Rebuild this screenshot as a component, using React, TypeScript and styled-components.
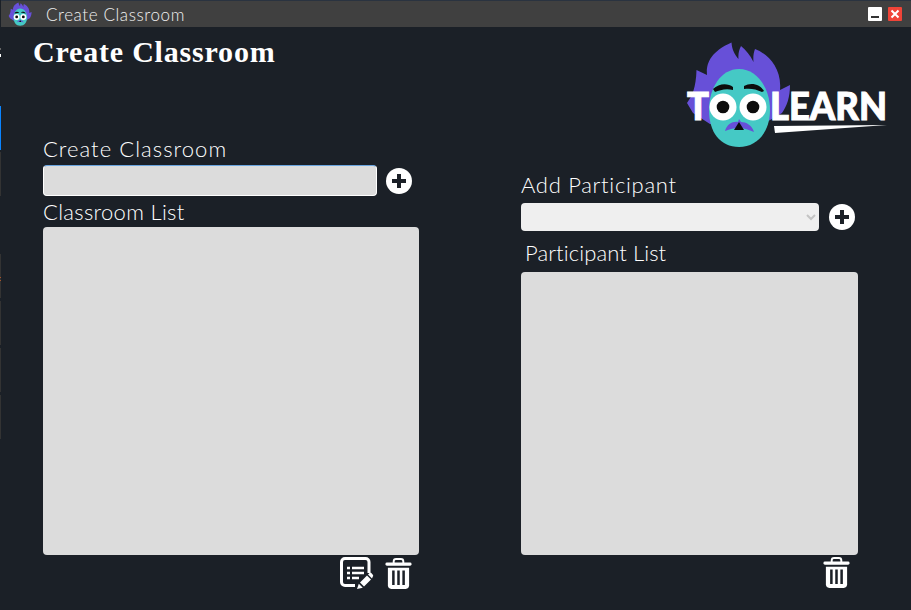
import React from "react";
import styled, { createGlobalStyle } from "styled-components";

const Global = createGlobalStyle`
  html, body { margin: 0; padding: 0; background: #1b2027; overflow: hidden; }
  * { box-sizing: border-box; }
`;

const Window = styled.div`
  width: 911px;
  height: 610px;
  display: flex;
  flex-direction: column;
  background: #1b2027;
  font-family: "Lato", "Open Sans", sans-serif;
  color: #fff;
`;

const TitleBar = styled.header`
  height: 27px;
  margin-left: 1px;
  padding: 0 9px 0 7px;
  display: flex;
  align-items: center;
  background: #404040;
  border-top: 1px solid #2a3340;
`;

const TitleText = styled.span`
  margin-left: 14px;
  flex: 1;
  font-size: 17px;
  font-weight: 300;
  letter-spacing: 0.6px;
  color: #f0f0f0;
`;

const WinButton = styled.button<{ $close?: boolean }>`
  width: 14px;
  height: 14px;
  margin-left: 6px;
  padding: 0;
  border: 0;
  border-radius: 1px;
  display: flex;
  align-items: center;
  justify-content: center;
  background: ${(p) => (p.$close ? "#f04438" : "#ffffff")};
`;

const Body = styled.div`
  flex: 1;
  display: flex;
`;

const Sliver = styled.div`
  width: 1px;
  padding-top: 21px;
  display: flex;
  flex-direction: column;
`;

const SliverMark = styled.i<{ $color: string; $h: number; $gap: number }>`
  display: block;
  width: 1px;
  height: ${(p) => p.$h}px;
  margin-bottom: ${(p) => p.$gap}px;
  background: ${(p) => p.$color};
`;

const Columns = styled.main`
  flex: 1;
  display: grid;
  grid-template-columns: 488px 1fr;
  padding-left: 32px;
`;

const LeftColumn = styled.section`
  display: flex;
  flex-direction: column;
`;

const RightColumn = styled.section`
  display: flex;
  flex-direction: column;
`;

const Heading = styled.h1`
  margin: 7px 0 0 0;
  height: 36px;
  font-family: "Liberation Serif", serif;
  font-size: 30px;
  line-height: 36px;
  font-weight: 700;
  letter-spacing: 0.8px;
`;

const FieldLabel = styled.label<{ $indent?: number; $mt: number; $mb: number; $track: number }>`
  display: block;
  height: 20px;
  margin: ${(p) => p.$mt}px 0 ${(p) => p.$mb}px ${(p) => p.$indent ?? 0}px;
  font-size: 22px;
  line-height: 20px;
  font-weight: 300;
  letter-spacing: ${(p) => p.$track}px;
  color: #ffffff;
`;

const LeftForm = styled.div`
  margin-top: 69px;
  padding-left: 10px;
  display: flex;
  flex-direction: column;
`;

const FieldRow = styled.div<{ $gap: number }>`
  display: flex;
  align-items: center;
  gap: ${(p) => p.$gap}px;
`;

const TextField = styled.input`
  width: 334px;
  height: 31px;
  padding: 0;
  border: 1px solid #fff;
  border-top-color: #6aa5e0;
  border-radius: 4px;
  background: #dcdcdc;
  outline: none;
`;

const Select = styled.select`
  width: 298px;
  height: 28px;
  border: 0;
  border-radius: 4px;
  background-color: #efefef;
  color: #c4c4c4;
  opacity: 1;
`;

const ListBox = styled.div<{ $w: number; $h: number }>`
  width: ${(p) => p.$w}px;
  height: ${(p) => p.$h}px;
  border-radius: 4px;
  background: #dcdcdc;
`;

const IconRow = styled.div<{ $w: number; $pr: number }>`
  width: ${(p) => p.$w}px;
  margin-top: 2px;
  padding-right: ${(p) => p.$pr}px;
  display: flex;
  justify-content: flex-end;
  gap: 11px;
`;

const IconButton = styled.button`
  padding: 0;
  border: 0;
  background: transparent;
  display: block;
  line-height: 0;
`;

const LogoBox = styled.div`
  height: 123px;
  margin-left: 159px;
  margin-top: 13px;
`;

const RightForm = styled.div`
  margin-top: 12px;
  display: flex;
  flex-direction: column;
`;

const Mascot = () => (
  <>
    <path
      fill="#6750d8"
      d="M687 103 C692 96 696 88 696.5 70 L707 75 C706 64 710 52 731.5 42.5 C732 50 735 55 738.5 59 C738 54 739 50 741 46 C746 50 750 55 753.5 62 C753 57 753.5 53 755 49 C768 54 782 68 780 90 L790 85 C790 97 787 106 782 113 L760 126 L710 124 L693 113 Z"
    />
    <path
      fill="#45c9c5"
      d="M739 69 C757 69 770 88 770 110 C770 132 757 147 739 147 C720 147 709 132 709 110 C709 88 721 69 739 69 Z"
    />
    <path fill="#0c0c0c" d="M713 89 C719 83 728 83 733 87 L733 90 C726 88 720 90 715 92 Z" />
    <path fill="#0c0c0c" d="M744 86 C751 82 760 84 764 91 L762 92 C756 89 750 88 744 89 Z" />
    <circle cx="723" cy="107" r="13.5" fill="#fff" />
    <circle cx="753" cy="107" r="13.5" fill="#fff" />
    <circle cx="723" cy="107" r="6.3" fill="#0c0c0c" />
    <circle cx="753" cy="107" r="6.3" fill="#0c0c0c" />
    <path fill="#6750d8" d="M725 131 C727 124 733 121 738 122 L739 119 L741 122 C746 122 752 125 754 132 C749 130 744 128 739 128 C734 128 730 129 725 131 Z" />
    <path fill="#0c0c0c" d="M739 122 L744 130 L734 130 Z" />
  </>
);

const LogoWord = styled.text`
  fill: #fff;
  stroke: #fff;
  stroke-width: 1;
  font-family: "Lato", sans-serif;
  font-weight: 900;
  font-size: 38px;
`;

const Logo = () => (
  <svg width="220" height="110" viewBox="680 40 220 110" aria-label="Toolearn logo">
    <Mascot />
    <LogoWord x="687" y="120" textLength="22" lengthAdjust="spacingAndGlyphs">T</LogoWord>
    <LogoWord x="770" y="120" textLength="117" lengthAdjust="spacingAndGlyphs">LEARN</LogoWord>
    <path fill="#fff" d="M774 126 L887 125 L775 133 Z" />
  </svg>
);

const AppIcon = () => (
  <svg width="24" height="24" viewBox="684 40 108 108">
    <Mascot />
  </svg>
);

const PlusIcon = () => (
  <svg width="26" height="26" viewBox="0 0 26 26">
    <circle cx="13" cy="13" r="13" fill="#fff" />
    <path d="M13 6 V20 M6 13 H20" stroke="#1b2027" strokeWidth="4" />
  </svg>
);

const TrashIcon = () => (
  <svg width="27" height="31" viewBox="0 0 28 32">
    <path fill="none" stroke="#fff" strokeWidth="2" d="M9 5 V3.5 C9 2 10 1 11.5 1 H16.5 C18 1 19 2 19 3.5 V5" />
    <rect x="0.5" y="4.5" width="27" height="3.5" rx="1.5" fill="#fff" />
    <path fill="#fff" d="M3 10 H25 V28.5 C25 30.5 23.5 32 21.5 32 H6.5 C4.5 32 3 30.5 3 28.5 Z" />
    <path stroke="#1b2027" strokeWidth="2.6" d="M8.7 13 V28 M14 13 V28 M19.3 13 V28" />
  </svg>
);

const EditListIcon = () => (
  <svg width="34" height="33" viewBox="0 0 34 33">
    <path fill="none" stroke="#fff" strokeWidth="3" strokeLinejoin="round" d="M29 16 V5 C29 3 27.5 1.5 25.5 1.5 H5 C3 1.5 1.5 3 1.5 5 V25 C1.5 27 3 28.5 5 28.5 H15" />
    <path stroke="#fff" strokeWidth="2.6" d="M7 11 H10 M12 11 H24 M7 16 H10 M12 16 H24 M7 21 H10 M12 21 H19" />
    <path fill="#fff" d="M20 25.5 L27 18.5 L31 22.5 L24 29.5 Z M18.8 26.7 L22.8 30.7 L17 32 Z M28 17.5 L29.5 16 C30 15.5 30.8 15.5 31.3 16 L32.8 17.7 C33.3 18.2 33.3 19 32.8 19.5 L32 21.5 Z" />
  </svg>
);

export default function App() {
  return (
    <Window>
      <Global />
      <TitleBar>
        <AppIcon />
        <TitleText>Create Classroom</TitleText>
        <WinButton aria-label="Minimize">
          <svg width="10" height="10" viewBox="0 0 10 10">
            <rect x="1" y="7" width="8" height="2" fill="#333" />
          </svg>
        </WinButton>
        <WinButton $close aria-label="Close">
          <svg width="10" height="10" viewBox="0 0 10 10">
            <path d="M1.5 1.5 L8.5 8.5 M8.5 1.5 L1.5 8.5" stroke="#fff" strokeWidth="2" />
          </svg>
        </WinButton>
      </TitleBar>
      <Body>
        <Sliver>
          <SliverMark $color="#666" $h={2} $gap={4} />
          <SliverMark $color="#fff" $h={3} $gap={49} />
          <SliverMark $color="#0a84ff" $h={44} $gap={2} />
          <SliverMark $color="#333" $h={44} $gap={58} />
          <SliverMark
            $color="linear-gradient(#333 23px, #a5532a 23px 24px, #333 24px 26px, #a5532a 26px 27px, #333 27px)"
            $h={44}
            $gap={3}
          />
          <SliverMark $color="#333" $h={44} $gap={3} />
          <SliverMark $color="#333" $h={44} $gap={3} />
          <SliverMark $color="#333" $h={44} $gap={0} />
        </Sliver>
        <Columns>
          <LeftColumn>
            <Heading>Create Classroom</Heading>
            <LeftForm>
              <FieldLabel $mt={0} $mb={6} $track={1.05}>Create Classroom</FieldLabel>
              <FieldRow $gap={9}>
                <TextField />
                <IconButton aria-label="Add classroom"><PlusIcon /></IconButton>
              </FieldRow>
              <FieldLabel $mt={6} $mb={5} $track={0.3}>Classroom List</FieldLabel>
              <ListBox $w={376} $h={328} />
              <IconRow $w={376} $pr={7}>
                <IconButton aria-label="Edit"><EditListIcon /></IconButton>
                <IconButton aria-label="Delete"><TrashIcon /></IconButton>
              </IconRow>
            </LeftForm>
          </LeftColumn>
          <RightColumn>
            <LogoBox><Logo /></LogoBox>
            <RightForm>
              <FieldLabel $mt={0} $mb={8} $track={0.7}>Add Participant</FieldLabel>
              <FieldRow $gap={10}>
                <Select disabled />
                <IconButton aria-label="Add participant"><PlusIcon /></IconButton>
              </FieldRow>
              <FieldLabel $indent={4} $mt={12} $mb={9} $track={0.1}>Participant List</FieldLabel>
              <ListBox $w={337} $h={283} />
              <IconRow $w={337} $pr={8}>
                <IconButton aria-label="Delete"><TrashIcon /></IconButton>
              </IconRow>
            </RightForm>
          </RightColumn>
        </Columns>
      </Body>
    </Window>
  );
}
